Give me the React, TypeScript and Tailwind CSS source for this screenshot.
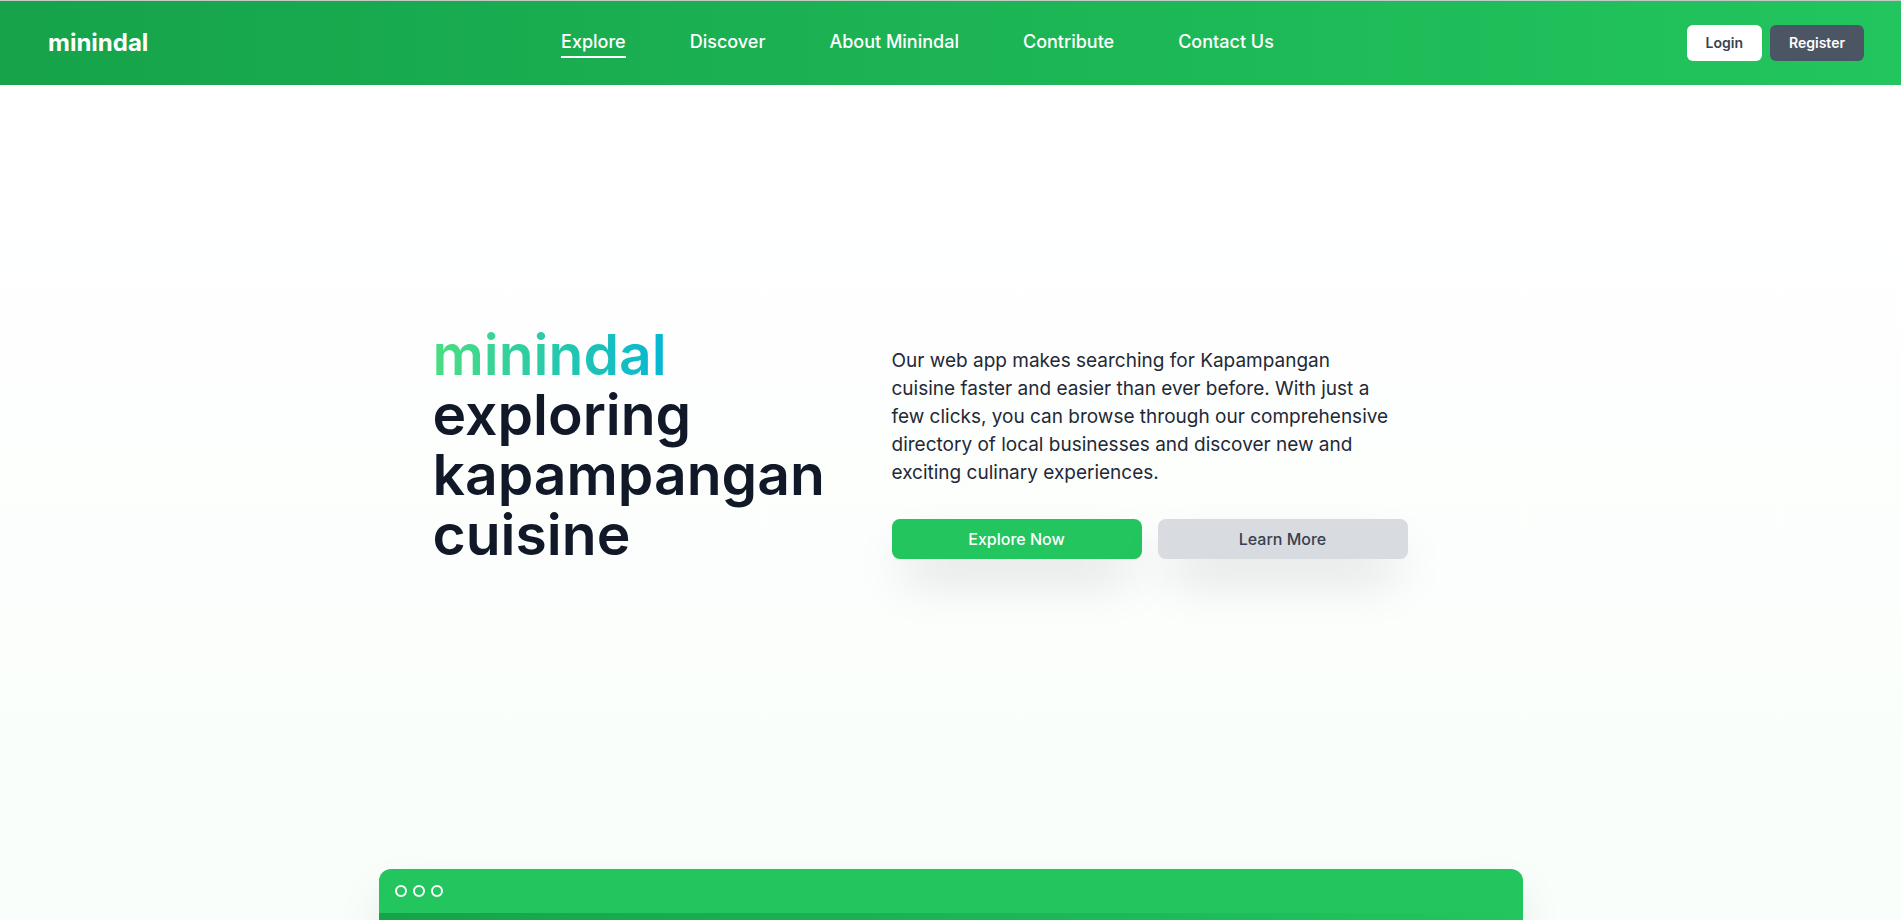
const navLinks = ["Explore", "Discover", "About Minindal", "Contribute", "Contact Us"];

function Header() {
  return (
    <header className="flex h-[85px] items-center justify-between border-t border-[#c3cac7] bg-linear-to-r/srgb from-[#16a34a] to-[#22c55e] pr-[37px] pl-12 text-white">
      <a href="#home" className="text-2xl font-bold">
        minindal
      </a>
      <nav className="flex gap-16 text-lg leading-7 font-medium">
        {navLinks.map((label, i) => (
          <a
            key={label}
            href="#"
            aria-current={i === 0 ? "page" : undefined}
            className={i === 0 ? "border-b-2 border-white" : "border-b-2 border-transparent"}
          >
            {label}
          </a>
        ))}
      </nav>
      <div className="flex gap-2 text-sm leading-5 font-semibold">
        <button type="button" className="rounded-md bg-white px-[19px] py-2 text-[#374151]">
          Login
        </button>
        <button type="button" className="rounded-md bg-[#4b5563] px-[19px] py-2 text-white">
          Register
        </button>
      </div>
    </header>
  );
}

function Hero() {
  return (
    <section className="flex grow items-center pb-16">
      <div className="mx-auto flex w-full max-w-[1144px] items-center gap-16 px-[54px]">
        <h1 className="w-[395px] shrink-0 text-[57px] leading-[60px] font-semibold text-[#111827]">
          <span className="bg-linear-to-r/srgb from-[#4ade80] to-[#06b6d4] bg-clip-text text-transparent">
            minindal
          </span>
          <br />
          exploring
          <br />
          kapampangan
          <br />
          cuisine
        </h1>
        <div className="w-[516px] pt-4">
          <p className="max-w-[504px] text-[19px] leading-7 text-[#1f2937]">
            Our web app makes searching for Kapampangan cuisine faster and easier than ever before. With just a few
            clicks, you can browse through our comprehensive directory of local businesses and discover new and
            exciting culinary experiences.
          </p>
          <div className="mt-8 grid grid-cols-2 gap-4 font-medium">
            <button type="button" className="h-10 rounded-lg bg-[#22c55e] text-white shadow-2xl">
              Explore Now
            </button>
            <button type="button" className="h-10 rounded-lg bg-[#d8dbe0] text-[#374151] shadow-2xl">
              Learn More
            </button>
          </div>
        </div>
      </div>
    </section>
  );
}

function AppPreview() {
  return (
    <section
      aria-label="App preview"
      className="mx-auto w-full max-w-[1144px] overflow-hidden rounded-t-xl bg-[#22c55e] shadow-2xl"
    >
      <div className="flex h-11 items-center gap-1.5 px-4">
        <span className="size-3 rounded-full border-2 border-white" />
        <span className="size-3 rounded-full border-2 border-white" />
        <span className="size-3 rounded-full border-2 border-white" />
      </div>
      <div className="h-[7px] bg-linear-to-r/srgb from-[#16a34a] to-[#22c55e]" />
    </section>
  );
}

export default function App() {
  return (
    <div className="flex min-h-screen flex-col overflow-hidden font-['Inter',sans-serif]">
      <Header />
      <main className="flex grow flex-col bg-linear-to-b/srgb from-white to-[#f9fefa]">
        <Hero />
        <AppPreview />
      </main>
    </div>
  );
}
